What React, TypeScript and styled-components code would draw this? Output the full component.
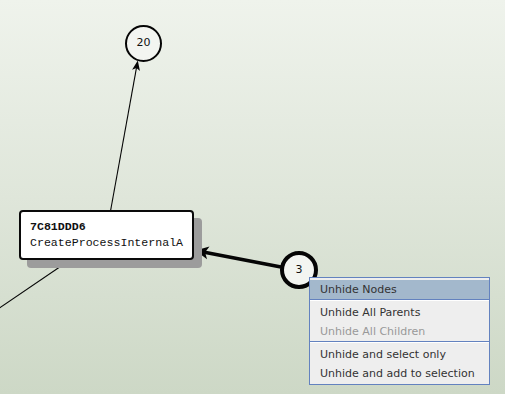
import React from 'react';
import styled, { createGlobalStyle } from 'styled-components';

type Pt = { x: number; y: number };

interface Edge {
  id: string;
  from: Pt;
  to: Pt;
  width: number;
  head: number;
  spread: number;
}

interface MenuEntry {
  label?: string;
  active?: boolean;
  disabled?: boolean;
  separator?: boolean;
}

const GlobalStyle = createGlobalStyle`
  html, body {
    margin: 0;
    padding: 0;
    width: 100%;
    height: 100%;
    overflow: hidden;
  }
  #root {
    width: 100%;
    height: 100%;
  }
`;

const Canvas = styled.div`
  position: relative;
  width: 505px;
  height: 394px;
  overflow: hidden;
  background: linear-gradient(to bottom, #eff3ec 0%, #dfe6da 50%, #cdd8c6 100%);
  font-family: 'DejaVu Sans', 'Liberation Sans', sans-serif;
`;

const EdgeLayer = styled.svg`
  position: absolute;
  left: 0;
  top: 0;
  width: 505px;
  height: 394px;
`;

const CircleNode = styled.div<{ $x: number; $y: number; $size: number; $ring: number }>`
  position: absolute;
  left: ${p => p.$x}px;
  top: ${p => p.$y}px;
  width: ${p => p.$size}px;
  height: ${p => p.$size}px;
  box-sizing: border-box;
  border: ${p => p.$ring}px solid #050505;
  border-radius: 50%;
  background: #f3f5f1;
  display: flex;
  align-items: center;
  justify-content: center;
  font-size: 11px;
  color: #111;
  padding-bottom: 2px;
`;

const FunctionNode = styled.div<{ $x: number; $y: number }>`
  position: absolute;
  left: ${p => p.$x}px;
  top: ${p => p.$y}px;
  width: 175px;
  height: 50px;
  box-sizing: border-box;
  border: 2px solid #0a0a0a;
  border-radius: 4px;
  background: #ffffff;
  box-shadow: 8px 8px 0 #9c9c9c;
  padding: 7px 0 0 9px;
  font-family: 'Liberation Mono', 'DejaVu Sans Mono', monospace;
  font-size: 11.6px;
  line-height: 16px;
  color: #111;
`;

const Address = styled.div`
  font-weight: bold;
`;

const FunctionName = styled.div``;

const MenuPopup = styled.div`
  position: absolute;
  left: 309px;
  top: 277px;
  width: 181px;
  box-sizing: border-box;
  border: 1px solid #6382bf;
  background: #eeeeee;
  padding: 2px 0 1px 0;
  font-family: 'DejaVu Sans', 'Liberation Sans', sans-serif;
  font-size: 11px;
`;

const MenuItem = styled.div<{ $active?: boolean; $disabled?: boolean }>`
  height: 19px;
  line-height: 19px;
  padding-left: 10px;
  background: ${p => (p.$active ? '#a3b8cc' : 'transparent')};
  color: ${p => (p.$disabled ? '#999999' : '#333333')};
  white-space: nowrap;
`;

const MenuSeparator = styled.div`
  height: 0;
  border-top: 1px solid #6382bf;
  border-bottom: 1px solid #ffffff;
  margin-bottom: 2px;
`;

const edges: Edge[] = [
  { id: 'a', from: { x: 110.7, y: 210 }, to: { x: 137.8, y: 60.5 }, width: 1.1, head: 10, spread: 4 },
  { id: 'b', from: { x: 70, y: 260 }, to: { x: -2, y: 309 }, width: 1.1, head: 0, spread: 0 },
  { id: 'c', from: { x: 281, y: 267 }, to: { x: 195.5, y: 250.5 }, width: 3.4, head: 13, spread: 6.5 },
];

const menu: MenuEntry[] = [
  { label: 'Unhide Nodes', active: true },
  { separator: true },
  { label: 'Unhide All Parents' },
  { label: 'Unhide All Children', disabled: true },
  { separator: true },
  { label: 'Unhide and select only' },
  { label: 'Unhide and add to selection' },
];

// arrow head with a small notch at the back, tip sits on `to`
const arrowHead = (e: Edge) => {
  const dx = e.to.x - e.from.x;
  const dy = e.to.y - e.from.y;
  const len = Math.sqrt(dx * dx + dy * dy);
  const ux = dx / len;
  const uy = dy / len;
  const bx = e.to.x - ux * e.head;
  const by = e.to.y - uy * e.head;
  const nx = e.to.x - ux * e.head * 0.75;
  const ny = e.to.y - uy * e.head * 0.75;
  const l = `${bx - uy * e.spread},${by + ux * e.spread}`;
  const r = `${bx + uy * e.spread},${by - ux * e.spread}`;
  return `M${e.to.x},${e.to.y} L${l} L${nx},${ny} L${r} Z`;
};

const lineEnd = (e: Edge) => {
  if (!e.head) return e.to;
  const dx = e.to.x - e.from.x;
  const dy = e.to.y - e.from.y;
  const len = Math.sqrt(dx * dx + dy * dy);
  return { x: e.to.x - (dx / len) * e.head * 0.7, y: e.to.y - (dy / len) * e.head * 0.7 };
};

const App: React.FC = () => {
  return (
    <>
      <GlobalStyle />
      <Canvas>
        <EdgeLayer viewBox="0 0 505 394">
          {edges.map(e => {
            const end = lineEnd(e);
            return (
              <g key={e.id}>
                <line x1={e.from.x} y1={e.from.y} x2={end.x} y2={end.y} stroke="#050505" strokeWidth={e.width} />
                {e.head > 0 && <path d={arrowHead(e)} fill="#050505" />}
              </g>
            );
          })}
        </EdgeLayer>

        <CircleNode $x={125} $y={25} $size={37} $ring={2}>20</CircleNode>

        <FunctionNode $x={19} $y={210}>
          <Address>7C81DDD6</Address>
          <FunctionName>CreateProcessInternalA</FunctionName>
        </FunctionNode>

        <CircleNode $x={280} $y={251} $size={38} $ring={4}>3</CircleNode>

        <MenuPopup>
          {menu.map((m, i) =>
            m.separator ? (
              <MenuSeparator key={i} />
            ) : (
              <MenuItem key={i} $active={m.active} $disabled={m.disabled}>
                {m.label}
              </MenuItem>
            )
          )}
        </MenuPopup>
      </Canvas>
    </>
  );
};

export default App;
